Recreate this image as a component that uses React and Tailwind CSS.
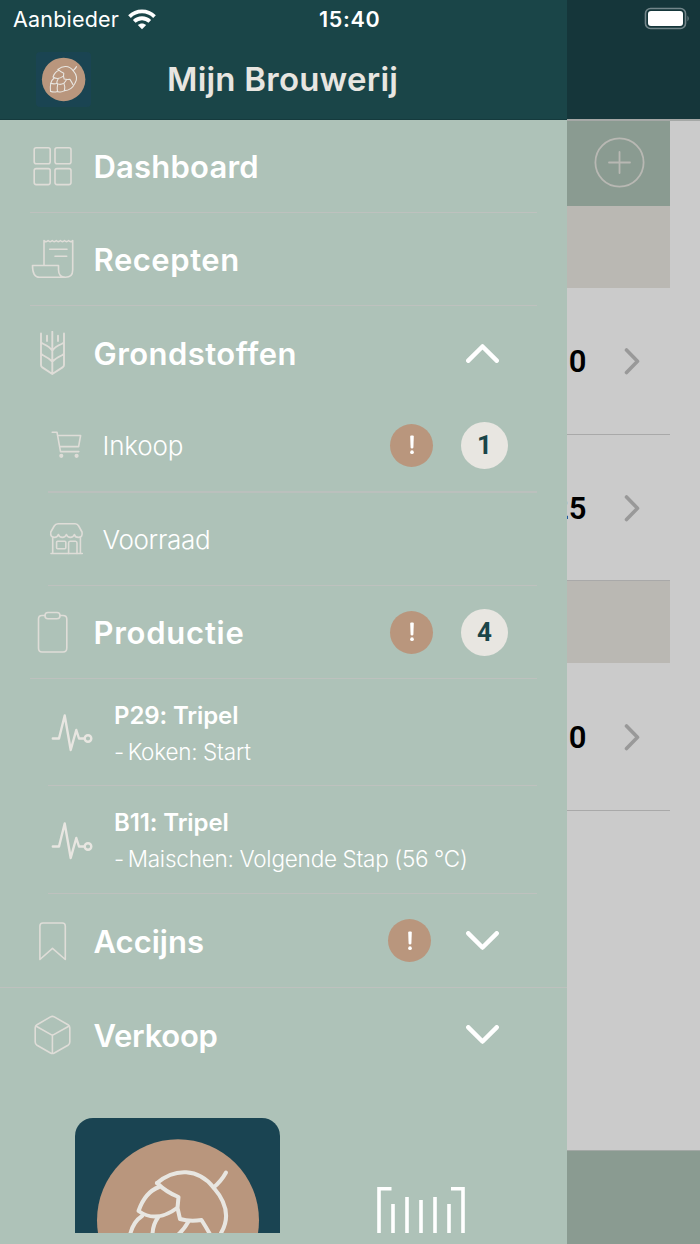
import React from 'react';

const HopLogo = ({ className }) => (
  <svg viewBox="0 0 205 205" className={className} fill="none">
    <circle cx="103" cy="102.3" r="81" fill="#b9967d" />
    <g stroke="#e8e6e1" strokeWidth="4" strokeLinecap="round" strokeLinejoin="round">
      <path d="M82 65C100 50 123 50 138.500 69.500C152 85 155 100 146 115C138 132 124 144 106 144C98 150 88 150 80 147C70 150 60 149 54 146" />
      <path d="M138.500 69.500C144 65 148 60 151 54.500" />
      <path d="M82 65C88 71 96 76 103.500 79L102.500 90L105 101C112 103 119 103 126.500 102C131 109 134 114 138 122" />
      <path d="M84 69C73 73 67 83 63.500 93C76 102 90 99 102 90" />
      <path d="M67 98C61 102 57 108 55 117C53 127 53 137 54 146" />
      <path d="M83 99.500C79 105 77.500 110 77.500 117C68 120 62 119 55 117" />
      <path d="M77.500 117C86 122 96 121 104 116C108 112 111 108 113.500 103.500" />
      <path d="M80 147C78 137 79 128 81 119M104 117C108 126 108 136 106 144" />
    </g>
  </svg>
);

const MenuIcon = ({ children, size = 44, className = '' }) => (
  <svg
    width={size}
    height={size}
    viewBox={`0 0 ${size} ${size}`}
    className={`shrink-0 ${className}`}
    fill="none"
    stroke="#dfddd8"
    strokeWidth="1.600"
    strokeLinecap="round"
    strokeLinejoin="round"
  >
    {children}
  </svg>
);

const DashboardIcon = () => (
  <MenuIcon>
    <rect x="4.200" y="3.800" width="16" height="16" rx="2" />
    <rect x="25" y="3.800" width="16" height="16" rx="2" />
    <rect x="4.200" y="24.600" width="16" height="16" rx="2" />
    <rect x="25" y="24.600" width="16" height="16" rx="2" />
  </MenuIcon>
);

const RecipeIcon = () => (
  <MenuIcon>
    <path d="M14 28.500V3.500q2.050 2.200 4.100 0q2.050 2.200 4.100 0q2.050 2.200 4.100 0q2.050 2.200 4.100 0q2.050 2.200 4.100 0q2.050 2.200 4.100 0q2.050 2.200 4.100 0V33q0 7.300-7.200 7.300q-7 0-7-7.500v-4.300H2.500q0 11.800 7 11.800H36" />
    <path d="M19.700 12.200H37M25 19.200H36.700" />
  </MenuIcon>
);

const WheatIcon = () => (
  <MenuIcon>
    <path strokeWidth="1.900" d="M11 2.500V34q0 1.500 1.300 2.400L22.300 43L32.500 36.400Q34 35.400 34 34V2.500M22.300 .800V43M11 11.500q1 .800 2.500 1.500q6.500 3 8.800 6.700q2.200-3.700 9.200-6.700q1.500-.700 2.500-1.500M11 22.500q1 1.200 2.500 2q6 3 8.800 6.200q2.800-3.200 9.200-6.200q1.500-.800 2.500-2M17 4.800V10M28 4.800V10" />
  </MenuIcon>
);

const CartIcon = () => (
  <MenuIcon size={36}>
    <path d="M4.200 5.200H9L12.500 24.600H30.800M9.700 8.500H32.600L30.600 19.600H11.700" />
    <circle cx="13.300" cy="28.800" r="1.300" fill="#dfddd8" />
    <circle cx="28.600" cy="28.800" r="1.300" fill="#dfddd8" />
  </MenuIcon>
);

const StoreIcon = () => (
  <MenuIcon size={36}>
    <path d="M10 2.800H27.200Q29.500 2.800 30.700 5L34 11Q35 16.400 30.500 16.400Q27 16.400 26.400 13.500Q25.300 16.400 22.400 16.400Q19.400 16.400 18.400 13.500Q17.300 16.400 14.400 16.400Q11.400 16.400 10.400 13.500Q9.500 16.400 6.500 16.400Q2 16.400 2.800 11L6.200 5Q7.500 2.800 10 2.800Z" />
    <path d="M4.700 16V32.500M32.400 16V32.500M3 32.500H34.300" />
    <rect x="8.600" y="20.300" width="9.200" height="7.500" rx="1" />
    <path d="M20.600 32.500V22Q20.600 20.300 22 20.300H27.500Q29 20.300 29 22V32.500" />
  </MenuIcon>
);

const ClipboardIcon = () => (
  <MenuIcon>
    <path d="M15 5.500H12Q8.500 5.500 8.500 9V38Q8.500 42 12 42H33Q36.800 42 36.800 38V9Q36.800 5.500 33 5.500H30" />
    <rect x="15" y="2.500" width="15" height="6.200" rx="3" />
  </MenuIcon>
);

const PulseIcon = () => (
  <MenuIcon className="mr-5">
    <g stroke="#e8e6e1" strokeWidth="2.400">
      <path d="M2.800 28.500H9L14.700 5.500L20.700 40L26.300 20L29 28.500H34" />
      <circle cx="38" cy="28.500" r="3.300" />
    </g>
  </MenuIcon>
);

const BookmarkIcon = () => (
  <MenuIcon>
    <path d="M9.900 40.500V7Q9.900 4 12.900 4H32.300Q35.300 4 35.300 7V40.500L22.500 29.300Z" />
  </MenuIcon>
);

const BoxIcon = () => (
  <MenuIcon>
    <path d="M20.500 3.900Q22.400 2.900 24.300 3.900L38 11.700Q39.800 12.800 39.800 14.800V29Q39.800 31.200 38 32.300L24.300 40Q22.400 41 20.500 40L7 32.300Q5.200 31.200 5.200 29V14.800Q5.200 12.800 7 11.700ZM5.800 13L22.400 22.400L39.200 13M22.400 22.400V40.500" />
  </MenuIcon>
);

const Chevron = ({ up }) => (
  <svg
    width="33"
    height="20"
    viewBox="0 0 33 20"
    className={up ? 'rotate-180' : ''}
    fill="none"
    stroke="#fff"
    strokeWidth="4.500"
    strokeLinecap="round"
    strokeLinejoin="round"
  >
    <path d="M2.300 2.300L16.500 16.500L30.700 2.300" />
  </svg>
);

const Alert = () => (
  <span className="flex size-[43px] items-center justify-center rounded-full bg-[#b9967d]">
    <svg width="6" height="20" viewBox="0 0 6 20" fill="#fff">
      <path d="M1.200 1.500Q1.200 .500 2.200 .500H3.800Q4.800 .500 4.800 1.500L4.400 12.500Q4.300 13.500 3 13.500Q1.700 13.500 1.600 12.500Z" />
      <circle cx="3" cy="17.200" r="1.850" />
    </svg>
  </span>
);

const Count = ({ value }) => (
  <span className="flex size-[47px] items-center justify-center rounded-full bg-[#e8e6e1] font-['Roboto',sans-serif] text-[26px] font-bold text-[#1a4548]">
    {value}
  </span>
);

const Label = ({ className = '', children }) => (
  <span className={`ml-[19.5px] pt-[2.5px] text-[31px] font-semibold whitespace-nowrap ${className}`}>
    {children}
  </span>
);

const SubLabel = ({ className = '', children }) => (
  <span className={`ml-[18.5px] pt-px text-[26px] font-light whitespace-nowrap ${className}`}>{children}</span>
);

const Badges = ({ count }) => (
  <div className="mr-[29px] ml-auto flex items-center gap-7">
    <Alert />
    <Count value={count} />
  </div>
);

const Process = ({ title, step }) => (
  <>
    <PulseIcon />
    <div className="pt-[3px] whitespace-nowrap">
      <p className="text-2xl leading-9 font-semibold tracking-[-0.1px]">{title}</p>
      <p className="text-[22.5px] leading-9 font-light tracking-[-0.2px] [word-spacing:-0.500px]">
        <span className="-mr-0.5">-</span> {step}
      </p>
    </div>
  </>
);

const Drawer = () => (
  <aside className="flex w-[567px] shrink-0 flex-col overflow-hidden bg-[#aec2b8] text-white">
    <header className="h-[120px] shrink-0 border-b border-[#153a3d] bg-[#1a4548]">
      <div className="flex h-[39px] items-center pl-[13px]">
        <span className="w-[106px] text-[21.5px] tracking-[0.2px]">Aanbieder</span>
        <svg width="28" height="21" viewBox="0 0 28 21" className="ml-[9px]" fill="none" stroke="#fff" strokeWidth="3.800">
          <path d="M1.500 7.600C8.500 .700 19.500 .700 26.500 7.600" />
          <path d="M6.200 12.400C10.600 8.200 17.400 8.200 21.800 12.400" />
          <path d="M14 20.300L9.800 16.100C12.200 13.900 15.800 13.900 18.200 16.100Z" fill="#fff" stroke="none" />
        </svg>
        <span className="ml-[163px] text-[21.5px] font-semibold tracking-[0.7px]">15:40</span>
      </div>
      <div className="flex h-20 items-center pl-9">
        <div className="size-[55px] rounded-[4px] bg-[#1a4452]">
          <HopLogo className="size-[55px]" />
        </div>
        <h1 className="ml-[76px] pt-[2px] text-[33px] font-semibold tracking-[0.22px] text-[#e8e6e1]">Mijn Brouwerij</h1>
      </div>
    </header>

    <ul>
      <li className="mx-[30px] flex h-[93px] items-center border-b border-[#bec1be]">
        <DashboardIcon />
        <Label className="tracking-[0.2px]">Dashboard</Label>
      </li>
      <li className="mx-[30px] flex h-[93px] items-center border-b border-[#bec1be]">
        <RecipeIcon />
        <Label className="tracking-[0.55px]">Recepten</Label>
      </li>
      <li className="mx-[30px] flex h-[93px] items-center">
        <WheatIcon />
        <Label className="tracking-[0.45px]">Grondstoffen</Label>
        <div className="mr-[38px] ml-auto">
          <Chevron up />
        </div>
      </li>
      <li className="mr-[30px] ml-12 flex h-[94px] items-center border-b-2 border-[#bbc0bd]">
        <CartIcon />
        <SubLabel className="tracking-[-0.15px]">Inkoop</SubLabel>
        <Badges count={1} />
      </li>
      <li className="mr-[30px] ml-12 flex h-[93px] items-center border-b border-[#bec1be]">
        <StoreIcon />
        <SubLabel className="tracking-[-0.3px]">Voorraad</SubLabel>
      </li>
      <li className="mx-[30px] flex h-[93px] items-center border-b border-[#bec1be]">
        <ClipboardIcon />
        <Label className="tracking-[0.75px]">Productie</Label>
        <Badges count={4} />
      </li>
      <li className="mr-[30px] ml-12 flex h-[107px] items-center border-b border-[#bec1be] pl-0.5">
        <Process title="P29: Tripel" step="Koken: Start" />
      </li>
      <li className="mr-[30px] ml-12 flex h-[108px] items-center border-b border-[#bec1be] pl-0.5">
        <Process title="B11: Tripel" step="Maischen: Volgende Stap (56 °C)" />
      </li>
      <li className="flex h-[94px] items-center border-b border-[#bec1be] px-[30px]">
        <BookmarkIcon />
        <Label>Accijns</Label>
        <div className="mr-[38px] ml-auto flex items-center gap-[35px]">
          <Alert />
          <Chevron />
        </div>
      </li>
      <li className="flex h-[94px] items-center px-[30px]">
        <BoxIcon />
        <Label className="tracking-[-0.25px]">Verkoop</Label>
        <div className="mr-[38px] ml-auto">
          <Chevron />
        </div>
      </li>
    </ul>

    <div className="mt-9 flex h-[115px] shrink-0 items-start overflow-hidden pl-[75px]">
      <div className="w-[205px] shrink-0 rounded-[18px] bg-[#1a4452]">
        <HopLogo className="size-[205px]" />
      </div>
      <svg width="88" height="46" viewBox="0 0 88 46" className="mt-[69px] ml-[97px]" fill="none" stroke="#fff" strokeWidth="3.600">
        <path d="M2 46V1.800H14.500M74 1.800H86V46M16 17V46M30 10V46M44 13V46M58 10V46M72 17V46" />
      </svg>
    </div>
  </aside>
);

const BatchRow = ({ value, className }) => (
  <div className={`flex w-[103px] items-center border-b border-[#a9a9a9] ${className}`}>
    <div className="flex w-[19.5px] justify-end overflow-hidden pt-[3px] font-['Roboto',sans-serif] text-[31px] font-semibold text-black">
      {value}
    </div>
    <svg
      width="16"
      height="28"
      viewBox="0 0 16 28"
      className="ml-[37px]"
      fill="none"
      stroke="#999"
      strokeWidth="3.600"
      strokeLinecap="round"
      strokeLinejoin="round"
    >
      <path d="M2.500 3L13.500 14.300L2.500 25.500" />
    </svg>
  </div>
);

const Backdrop = () => (
  <main className="flex grow flex-col bg-[#cbcbcb]">
    <header className="flex h-[119px] shrink-0 items-start justify-end bg-[#15363a] pt-[7px] pr-2.5">
      <svg width="46" height="23" viewBox="0 0 46 23" fill="none">
        <rect x="1.500" y="1.500" width="40" height="20" rx="5" stroke="#73868a" strokeWidth="1.600" />
        <rect x="4" y="4" width="35" height="15" rx="3" fill="#fff" />
        <path d="M43.500 8.500Q46 11.500 43.500 14.500Z" fill="#73868a" />
      </svg>
    </header>
    <div className="h-0.5 shrink-0 bg-[#a5a8a6]" />
    <div className="flex h-[85px] w-[103px] shrink-0 items-center justify-center bg-[#8a9b91] pb-0.5 pl-px">
      <svg width="51" height="51" viewBox="0 0 51 51" fill="none" stroke="#b8b8b3" strokeWidth="1.800">
        <circle cx="25.500" cy="25.500" r="24.100" />
        <path d="M15 25.500H36M25.500 15V36" strokeLinecap="round" />
      </svg>
    </div>
    <div className="h-[82px] w-[103px] shrink-0 bg-[#bab8b3]" />
    <BatchRow value="0" className="h-[147px]" />
    <BatchRow value="25" className="h-[146px]" />
    <div className="h-[82px] w-[103px] shrink-0 bg-[#bab8b3]" />
    <BatchRow value="0" className="h-[148px]" />
    <div className="mt-auto h-[94px] border-t border-[#a3a8a5] bg-[#8a9b91]" />
  </main>
);

const App = () => (
  <div className="flex h-[1244px] w-[700px] overflow-hidden font-['Inter',sans-serif]">
    <Drawer />
    <Backdrop />
  </div>
);

export default App;
